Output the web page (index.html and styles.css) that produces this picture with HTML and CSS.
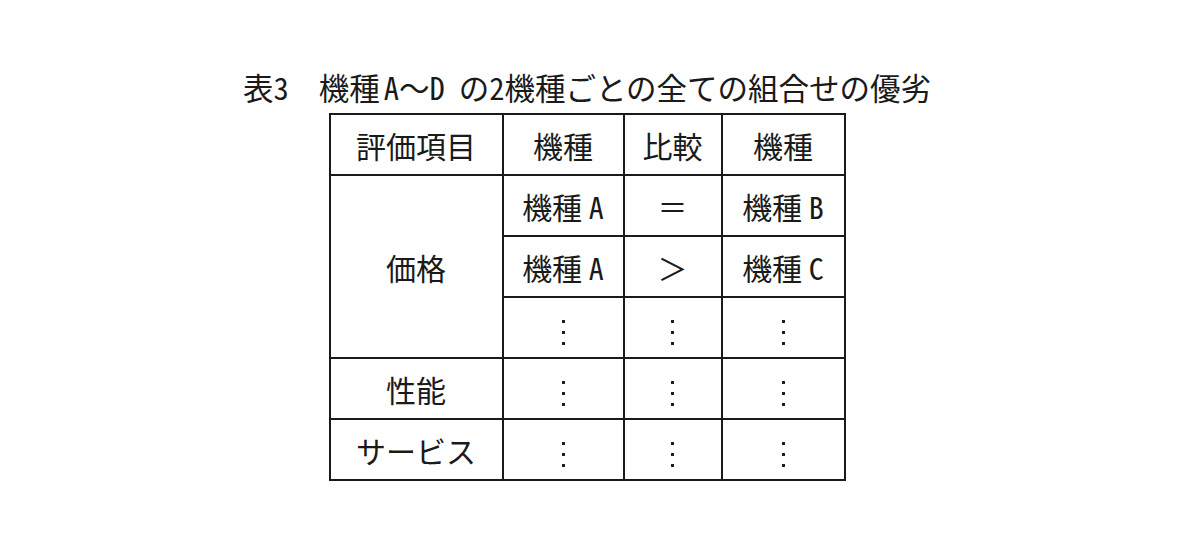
FILE: index.html
```html
<!DOCTYPE html>
<html lang="ja">
<head>
<meta charset="utf-8">
<title>表3 機種A～Dの2機種ごとの全ての組合せの優劣</title>
<link rel="stylesheet" href="styles.css">
</head>
<body>
<main class="page">
  <h1 class="caption"><span class="caption-no">表<span class="hw">3</span></span>機種<span class="hw t-a">A</span><span class="t-wave">～</span><span class="hw">D</span><span class="t-no">の</span><span class="hw">2</span>機種ごとの全ての組合せの優劣</h1>
  <table class="cmp">
    <colgroup>
      <col class="c-item">
      <col class="c-model">
      <col class="c-cmp">
      <col class="c-model2">
    </colgroup>
    <thead>
      <tr><th>評価項目</th><th>機種</th><th>比較</th><th>機種</th></tr>
    </thead>
    <tbody>
      <tr><td rowspan="3">価格</td><td>機種 <span class="hw">A</span></td><td>＝</td><td>機種 <span class="hw">B</span></td></tr>
      <tr><td>機種 <span class="hw">A</span></td><td>＞</td><td>機種 <span class="hw">C</span></td></tr>
      <tr><td><span class="vdots"></span></td><td><span class="vdots"></span></td><td><span class="vdots"></span></td></tr>
      <tr><td>性能</td><td><span class="vdots"></span></td><td><span class="vdots"></span></td><td><span class="vdots"></span></td></tr>
      <tr><td>サービス</td><td><span class="vdots"></span></td><td><span class="vdots"></span></td><td><span class="vdots"></span></td></tr>
    </tbody>
  </table>
</main>
</body>
</html>
```

FILE: styles.css
```css
html, body {
  margin: 0;
  padding: 0;
  background: #ffffff;
}

body {
  font-family: "Noto Sans CJK JP", "Noto Sans", sans-serif;
  color: #1a1a1a;
}

.page {
  width: 1174px;
  display: flex;
  flex-direction: column;
  align-items: center;
  padding-top: 69px;
}

.hw {
  font-feature-settings: "hwid";
}

.caption {
  margin: 0 0 8px 0;
  font-size: 30.5px;
  line-height: 36px;
  font-weight: 400;
  white-space: nowrap;
}

.caption-no {
  margin-right: 30px;
}

.t-a {
  margin-left: 4px;
}

.t-wave {
  margin-left: 0;
}

.t-no {
  margin-left: 14px;
}

.cmp {
  border-collapse: collapse;
  table-layout: fixed;
  width: 515px;
  font-size: 30px;
}

.c-item { width: 173px; }
.c-model { width: 121px; }
.c-cmp { width: 98px; }
.c-model2 { width: 123px; }

.cmp th,
.cmp td {
  border: 2.5px solid #1a1a1a;
  height: 59px;
  padding: 0;
  text-align: center;
  vertical-align: middle;
  font-weight: 400;
  line-height: 36px;
}

.vdots {
  display: inline-block;
  width: 3px;
  height: 25px;
  vertical-align: middle;
  background: radial-gradient(circle, #1a1a1a 1.4px, transparent 1.9px) 0 -4px / 3px 11px repeat-y;
}
```
